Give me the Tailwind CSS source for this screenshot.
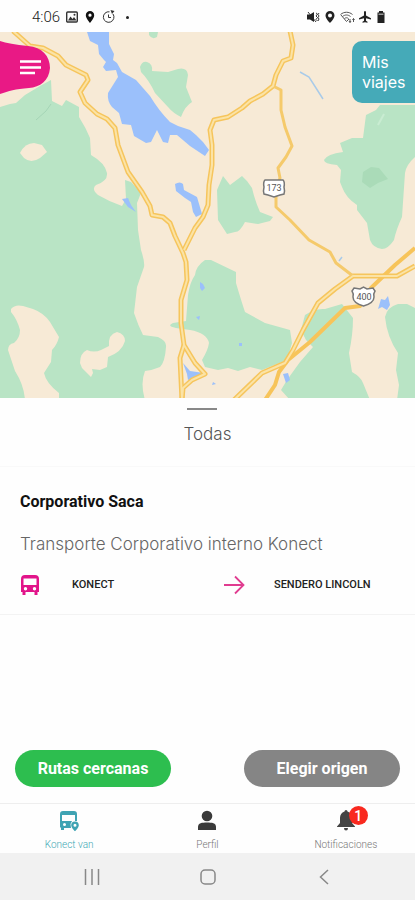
<!DOCTYPE html>
<html lang="es">
<head>
  <meta charset="UTF-8" />
  <meta name="viewport" content="width=device-width, initial-scale=1.0"/>
  <title>Konect</title>
  <script src="https://cdn.jsdelivr.net/npm/@tailwindcss/browser@4"></script>
</head>
<body class="bg-[#fefefe] font-['Roboto',sans-serif]">
  <div class="min-h-screen flex flex-col">

    <!-- Status bar -->
    <header class="h-8 px-8 pt-[2px] flex items-center justify-between text-[#333]">
      <div class="flex items-center gap-[6px]">
        <span class="text-[15px] leading-5 font-light text-[#222]">4:06</span>
        <svg class="w-3 h-3" viewBox="0 0 12 12" fill="none" stroke="currentColor"><rect x=".7" y="1" width="10.6" height="10" rx="1" stroke-width="1.4"/><path d="M2 9.5l2.5-4 2 2.5L8 6l2.500 3.500z" fill="currentColor" stroke="none"/><circle cx="8.500" cy="3.700" r="1" fill="currentColor" stroke="none"/></svg>
        <svg class="w-3 h-3" viewBox="0 0 12 12" fill="#111"><path fill-rule="evenodd" d="M6 0a4.200 4.200 0 0 1 4.200 4.200C10.200 7.200 6 12 6 12S1.800 7.200 1.800 4.200A4.200 4.200 0 0 1 6 0zM6 2.600a1.600 1.600 0 1 0 0 3.200 1.600 1.600 0 0 0 0-3.200z"/></svg>
        <svg class="w-[14px] h-[14px]" viewBox="0 0 14 14" fill="none" stroke="currentColor"><path d="M11 4a5.300 5.300 0 1 1-3.500-2.200M6.500 4.500v3H9" stroke-width="1"/><path d="M8.500 0l4 1-2.500 3z" fill="currentColor" stroke="none"/></svg>
        <span class="ml-1 size-[3px] rounded-full bg-[#222]"></span>
      </div>
      <div class="flex items-center gap-[4px] -mr-1">
        <svg class="w-[13px] h-3" viewBox="0 0 13 12" fill="#222"><path d="M0 3.500h3L7 1v10L3 8.500H0z"/><path d="M1 1l8 10M9 2l1.500 1L9 5l1.500 1.500L9 8.500l1.500 1.500M12 2l-1 1.500 1 1.500-1 1.500 1 1.500-1 2" fill="none" stroke="#222" stroke-width=".9"/></svg>
        <svg class="w-3 h-3" viewBox="0 0 12 12" fill="#222"><path fill-rule="evenodd" d="M6 0a4.500 4.500 0 0 1 4.500 4.500C10.500 7.500 6 12 6 12S1.500 7.500 1.500 4.500A4.500 4.500 0 0 1 6 0zM6 2.500a2 2 0 1 0 0 4 2 2 0 0 0 0-4z"/></svg>
        <svg class="w-[15px] h-3" viewBox="0 0 15 12" fill="none" stroke="#555"><path d="M.5 3.500C4 .5 9 .5 12.500 3.500M2.500 5.500c2.500-2 5.500-2 8 0M4.500 7.500c1.300-1 2.700-1 4 0M1 4l5.500 6.500L9 8M10 8v3.500M13.500 11V7.500M9 10l1 1.500 1-1.500M12.500 9l1-1.500 1 1.500"/></svg>
        <svg class="w-3 h-3" viewBox="0 0 12 12" fill="#222"><path d="M6 0c.6 0 1 .6 1 1.500v3l5 2.700v1.200L7 7.200v2.600l1.500 1v.9L6 11.200l-2.500.5v-.9l1.500-1V7.200L0 8.400V7.200l5-2.700v-3C5 .6 5.400 0 6 0z"/></svg>
        <svg class="w-3 h-3" viewBox="0 0 12 12" fill="#222"><path d="M4 0h4v1.500h1.500V12h-7V1.500H4z"/><path d="M3.500 2.500h5v1.500h-5z" fill="#999"/></svg>
      </div>
    </header>

    <!-- Map -->
    <section class="relative h-[366px] overflow-hidden bg-[#f7ead6]">
      <svg class="w-full h-full" viewBox="0 32 415 366" preserveAspectRatio="xMidYMid slice">
        <!-- Woods -->
        <g fill="#b9e4c5">
          <path d="M0 107L10 104 16 103 25 95 40 86 51 80 52 101 62 106 66 100 79 107 79 117Q86 128 90 138L91 155Q105 163 107 173 108 181 96 185 91 189 98 195 110 202 122 206L126 199 125 180 131 182 141 193 137 203 138 230 141 250Q145 262 144 267L137 287 134 313Q138 325 143 335L158 337Q167 341 166 347 165 362 160 367 153 370 145 371 140 383 145 400H0z"/>
          <path d="M140 67Q142 61 147 62 153 64 152 71L168 72 178 69Q187 67 188 75L186 87 192 102Q185 106 181 117 173 113 168 107L155 93Q149 80 141 72z"/>
          <path d="M149 32H158L157 37Q152 40 149 35z"/>
          <path d="M217 190L223 176 230 185 242 176 247 181 252 188Q255 201 260 212L273 217 270 221 258 224 245 222Q240 232 235 232L227 234 218 220z"/>
          <path d="M380 105H415V157Q406 165 405 173L402 217Q396 230 394 240 388 249 382 249 373 248 370 240L367 223 357 210 357 205Q346 198 342 187L340 182 341 170 337 165Q324 164 324 160 327 154 343 152L340 143 352 138 363 138 366 115 376 110z"/>
          <path d="M205 260L211 260 236 272 236 283Q241 300 245 312L265 323 290 330 292 343 287 360 262 370 250 367 238 371 228 368 218 370 205 367 202 360Q208 350 209 343 207 333 190 330L176 328Q166 326 173 323L186 321 188 295Q190 282 195 275 196 266 205 260z"/>
          <path d="M305 315Q315 308 325 309L342 304 353 318Q353 335 349 353L352 372Q361 377 363 383L370 400H290L281 390 287 380 300 362 313 347 306 340 301 330z"/>
          <path d="M385 317Q387 307 398 304L407 304 415 308V400H397L399 385 396 370 398 353Q387 337 385 317z"/>
        </g>
        <g fill="#f7ead6">
          <path d="M20 153Q25 143 34 143L42 145 47 152 40 158Q31 164 24 158z"/>
          <path d="M11 309Q15 304 23 306L33 309Q44 313 50 322L59 337Q57 345 52 350L51 362 44 373Q46 383 59 393V400H25Q24 385 15 371L8 350Q8 344 14 343 20 338 20 330 17 319 11 312z"/>
          <path d="M80 363Q80 353 87 350 94 353 101 350L109 346Q108 334 117 332 125 334 125 341 122 352 108 357L107 367 100 370 92 369 93 373 91 377 82 368z"/>
        </g>
        <path d="M363 172L371 167 379 168 388 179 378 183 370 188 362 182z" fill="#aadbb8"/>
        <path d="M36 120L46 111 51 104" stroke="#a5d5b6" fill="none"/>
        <path d="M384 114L378 125" stroke="#c9ecd2" stroke-width="2" fill="none"/>

        <!-- Water -->
        <g fill="#9bc0fb">
          <path d="M87 32L90 41 98 45 99 54 104 60 106 62 103 67 106 71 116 70 118 77 108 93Q107 101 112 107L119 113 122 124 131 125 134 136 146 143 151 142 157 130 163 142 168 143 170 135 177 135 190 146 205 156 209 150 203 142 196 135 190 130 178 126 170 122Q159 111 150 96L136 80 122 72 117 63 113 60 114 54 109 44V32z"/>
          <path d="M175 184Q180 181 183 184L184 190 197 197 202 214 196 217 193 212 191 202 185 198 176 191z"/>
          <path d="M122 199L128 198 131 205 136 212 128 207z"/>
          <path d="M183 363L190 371 204 373 195 377 188 380 187 374z"/>
          <path d="M378 309L381 299 385 300 388 296 390 305 387 310 382 307z"/>
          <path d="M283 374L288 373 290 380 286 383z"/>
          <path d="M200 282l3 2 2 4-3 3-2-3zM196 317l4-1-1 4zM213 382l3 2-4 1zM239 343h3v3h-3z"/>
        </g>
        <path d="M300 72L309 77 316 88 323 99M342 257l-3 4" stroke="#a9cbe9" stroke-width="1.500" fill="none"/>

        <!-- Roads -->
        <g fill="none" stroke="#f6c55c" stroke-linejoin="round">
          <g stroke-width="5">
            <path id="west" d="M13 31L30 46 43 48 58 56 66 65 86 75 88 80 80 92 85 103 97 114 107 119 115 128 118 145 128 172 142 192 150 206 152 215 163 217 170 223 175 236 183 253 186 262 187 280 181 300 181 323 184 345 195 363 205 374 192 380 183 388 182 400"/>
            <path id="fork" d="M184 345L180 358 182 400"/>
            <path id="north" d="M290 31L293 45 291 58 283 61 276 75 273 86 263 94 250 101 242 108 228 117 214 120 210 130 212 145 212 165 209 185 208 205 203 217 195 228 184 250"/>
            <path id="east" d="M234 400L262 373 285 363 293 350 303 330 318 303 335 289 353 276 397 276 415 266"/>
          </g>
          <path d="M273 86L281 90 281 110 285 127 292 146 286 157 278 168 280 178 276 190 276 207 290 220 309 240 330 252 336 263 353 276" stroke="#f5ca6b" stroke-width="3"/>
          <path d="M265 400L275 385 279 372 288 360 310 342 345 308 360 306 371 288 395 265 415 248" stroke="#f7c45a" stroke-width="4"/>
        </g>
        <g fill="none" stroke="#fbe3a6" stroke-width="2" stroke-linejoin="round">
          <use href="#west"/>
          <use href="#fork"/>
          <use href="#north"/>
          <use href="#east"/>
        </g>

        <!-- Road shields -->
        <g fill="#fff" stroke="#777" stroke-width="1.500">
          <path d="M265 180H283Q285 182 284 187 285 191 284 194L280 195 274 197 268 195 264 194Q263 191 264 187 263 182 265 180z"/>
          <path d="M354 288L360 289 363.500 287 367 289 373 288 375 291Q373 294 374 297 374 303 363.500 306 353 303 353 297 354 294 352 291z"/>
        </g>
        <g fill="#555" font-family="Roboto" font-size="9" text-anchor="middle">
          <text x="274" y="191">173</text>
          <text x="364" y="300">400</text>
        </g>
      </svg>

      <button class="absolute left-0 top-2" aria-label="Menú">
        <svg class="w-[51px] h-[55px]" viewBox="0 0 51 55"><path d="M0 1Q9 4 28 6C42 7 50 16 50 28 49 41 40 47 29 48 15 49 9 51 0 54z" fill="#e91985"/><path d="M20 21.500h21M20 27.500h21M20 33h15" stroke="#fff" stroke-width="2.500"/></svg>
      </button>
      <button class="absolute right-0 top-[9px] w-[63px] h-[62px] pl-[10px] rounded-l-[10px] bg-[#45aab8] text-left text-base leading-5 text-white font-['Inter',sans-serif]">Mis viajes</button>
    </section>

    <!-- Routes sheet -->
    <main class="flex-1 flex flex-col">
      <div class="h-[69px] pt-[10px] flex flex-col items-center gap-3 border-b border-[#f9f9f9] font-['Inter',sans-serif]">
        <div class="mr-[11px] w-[30px] h-[2px] bg-[#888]"></div>
        <h2 class="text-[17px] leading-6 font-light text-[#555]">Todas</h2>
      </div>

      <article class="px-5 pt-[23px] pb-[17px] border-b border-[#f3f3f3]">
        <h3 class="text-base leading-6 font-bold text-[#111]">Corporativo Saca</h3>
        <p class="mt-[18px] text-[17px] leading-6 font-light text-[#666] font-['Inter',sans-serif]">Transporte Corporativo interno Konect</p>
        <div class="mt-[17px] flex items-center text-[11px] leading-6 font-medium text-[#222]">
          <svg class="w-5 h-[22px]" viewBox="0 0 20 22" fill="#e2148a"><path fill-rule="evenodd" d="M5 1h10q4 0 4 4v13h-1.500v3h-3v-3h-9v3h-3v-3H1V5q0-4 4-4zM3.500 4.500V11h13V4.500zM5.500 13a1.700 1.700 0 1 0 0 3.400 1.700 1.700 0 0 0 0-3.400zm9 0a1.700 1.700 0 1 0 0 3.400 1.700 1.700 0 0 0 0-3.400z"/></svg>
          <span class="ml-8 flex-1">KONECT</span>
          <svg class="w-[22px] h-5" viewBox="0 0 22 20" fill="none" stroke="#e03c90" stroke-width="1.800"><path d="M1 10h19M12 1.500l8.500 8.500-8.500 8.500"/></svg>
          <span class="ml-[29px] w-[121px]">SENDERO LINCOLN</span>
        </div>
      </article>

      <div class="mt-auto px-[15px] pb-4 flex justify-between text-base font-bold text-white">
        <button class="w-[156px] h-[37px] rounded-full bg-[#2dbe4f]">Rutas cercanas</button>
        <button class="w-[156px] h-[37px] rounded-full bg-[#858585]">Elegir origen</button>
      </div>
    </main>

    <!-- Tabs -->
    <nav class="h-[50px] pt-[6px] grid grid-cols-3 border-t border-[#eee] text-[10px] leading-3 font-light text-[#777]">
      <a href="#" class="flex flex-col items-center gap-[7px] text-[#3fa9b5]">
        <svg class="w-5 h-[22px]" viewBox="0 0 20 22" fill="#3fa3b3"><path fill-rule="evenodd" d="M4 1h11q3 0 3 3v7h-2V5H3v6h10l-1.500 3 .5 4H5v2H2v-2.500H1V4q0-3 3-3zM5.500 13a1.500 1.500 0 1 0 0 3 1.500 1.500 0 0 0 0-3z"/><path fill-rule="evenodd" d="M16 11.500a3.800 3.800 0 0 1 3.800 3.800c0 2.700-3.800 6-3.800 6s-3.800-3.300-3.800-6a3.800 3.800 0 0 1 3.800-3.800zm0 2.300a1.500 1.500 0 1 0 0 3 1.500 1.500 0 0 0 0-3z"/></svg>
        Konect van
      </a>
      <a href="#" class="flex flex-col items-center gap-[7px]">
        <svg class="w-5 h-[22px]" viewBox="0 0 20 22" fill="#3a3a3a"><circle cx="10" cy="6" r="5.300"/><path d="M1 20v-3c0-4 4-4.500 9-4.500s9 .5 9 4.500v3z"/></svg>
        Perfil
      </a>
      <a href="#" class="flex flex-col items-center gap-[7px]">
        <span class="relative">
          <svg class="w-5 h-[22px]" viewBox="0 0 20 22" fill="#444"><path d="M10 0q1.500 0 1.500 1.500Q16 3 16 8v5l3 3.500V17H1v-.5L4 13V8q0-5 4.500-6.500Q8.500 0 10 0zM8 18h4q0 2.500-2 2.500T8 18z"/></svg>
          <span class="absolute left-[13px] -top-1 size-[19px] rounded-full bg-[#f9291f] text-center text-sm leading-5 font-medium text-white">1</span>
        </span>
        Notificaciones
      </a>
    </nav>

    <!-- System buttons -->
    <footer class="h-[47px] grid grid-cols-[repeat(3,116px)] justify-center bg-[#f1f1f1]">
      <button class="flex items-center justify-center" aria-label="Recientes"><svg class="w-4 h-4" viewBox="0 0 16 16" stroke="#888" stroke-width="1.500"><path d="M1.500 0v16M8 0v16M14.500 0v16"/></svg></button>
      <button class="flex items-center justify-center" aria-label="Inicio"><svg class="w-4 h-4" viewBox="0 0 16 16" fill="none" stroke="#888" stroke-width="1.500"><rect x="1" y="1" width="14" height="14" rx="4"/></svg></button>
      <button class="flex items-center justify-center" aria-label="Atrás"><svg class="w-4 h-4" viewBox="0 0 16 16" fill="none" stroke="#888" stroke-width="1.500"><path d="M12 1L4.500 8l7.500 7"/></svg></button>
    </footer>

  </div>
</body>
</html>
